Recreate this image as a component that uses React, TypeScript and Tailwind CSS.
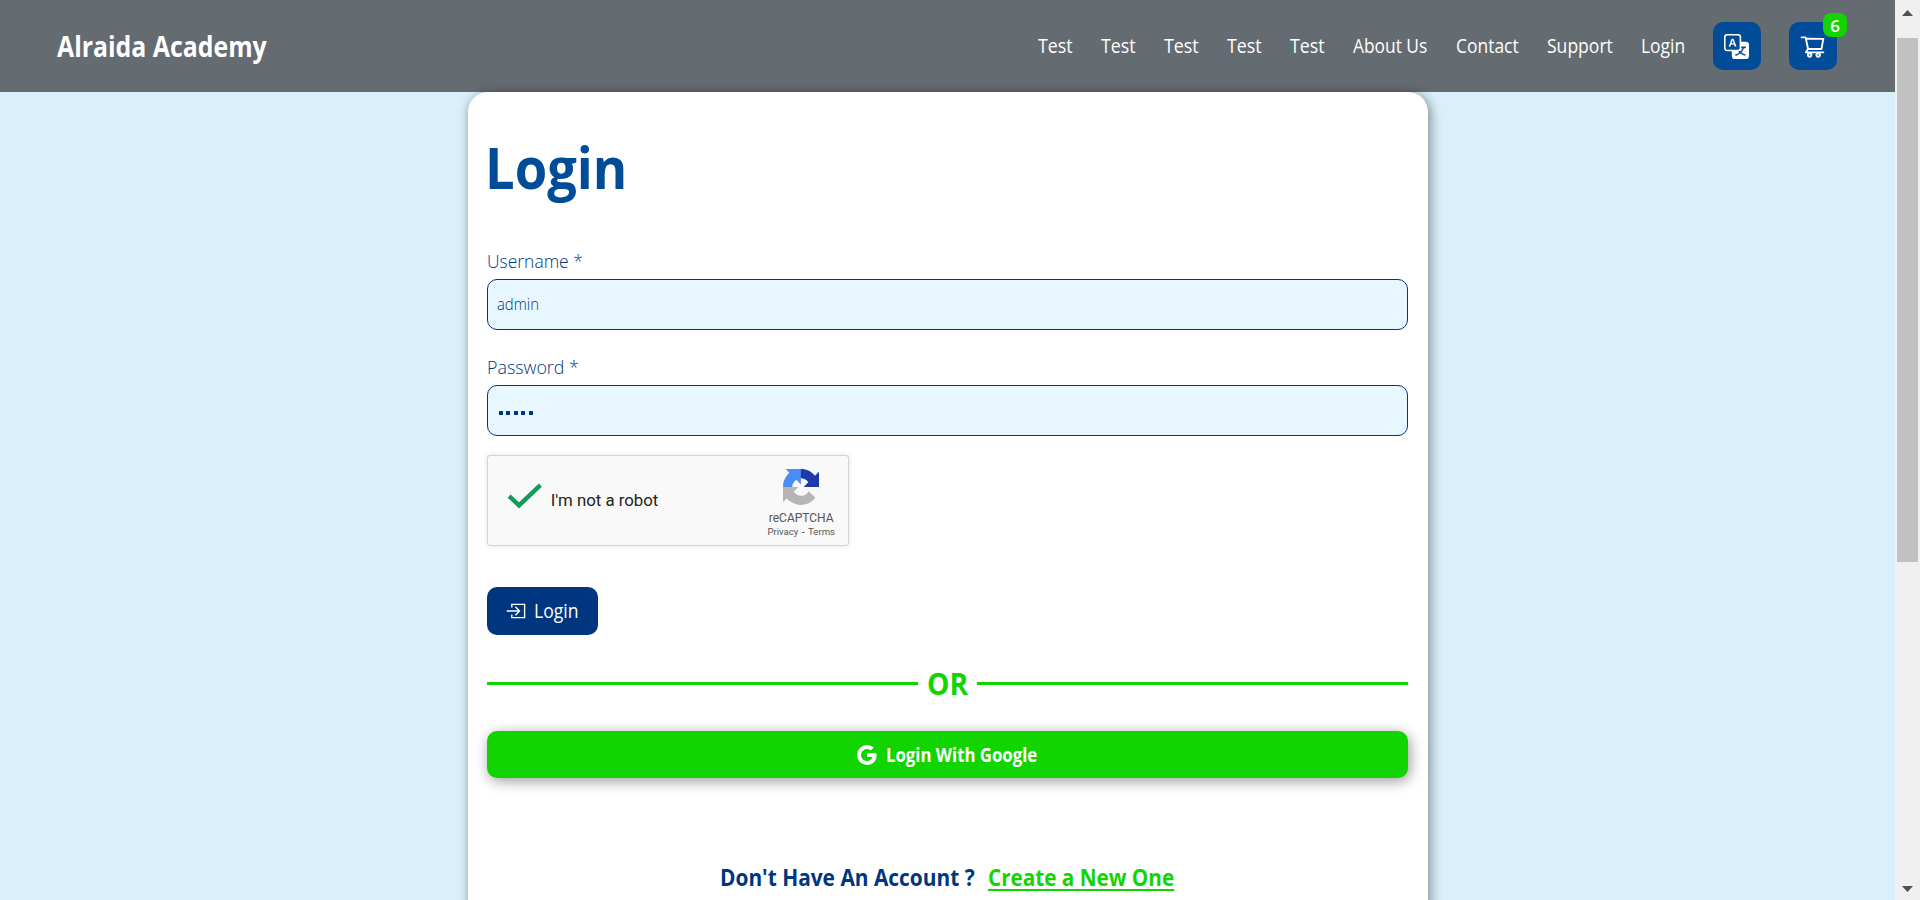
import React from "react";
import { AiOutlineShoppingCart } from "react-icons/ai";
import { BsGoogle, BsTranslate } from "react-icons/bs";

const navItems = [
  { label: "Test", box: "w-[34px]", scale: "scale-x-[0.925]" },
  { label: "Test", box: "w-[34px]", scale: "scale-x-[0.925]" },
  { label: "Test", box: "w-[34px]", scale: "scale-x-[0.925]" },
  { label: "Test", box: "w-[34px]", scale: "scale-x-[0.925]" },
  { label: "Test", box: "w-[34px]", scale: "scale-x-[0.925]" },
  { label: "About Us", box: "w-[74px]", scale: "scale-x-[0.9]" },
  { label: "Contact", box: "w-[62px]", scale: "scale-x-[0.905]" },
  { label: "Support", box: "w-[65px]", scale: "scale-x-[0.91]" },
  { label: "Login", box: "w-[43px]", scale: "scale-x-[0.905]" },
];

function Header() {
  return (
    <header className="flex h-[92px] shrink-0 items-center justify-between bg-[#646b71] pl-[57px] pr-[58px] text-white">
      <span className="origin-left scale-x-[0.857] whitespace-nowrap text-[29px] font-bold">Alraida Academy</span>
      <nav className="flex items-center gap-[29px]">
        {navItems.map((item, i) => (
          <a key={i} className={`-ml-[0.5px] mr-[0.5px] block ${item.box}`}>
            <span className={`inline-block origin-left whitespace-nowrap text-[19.3px] font-medium ${item.scale}`}>
              {item.label}
            </span>
          </a>
        ))}
        <button className="flex size-12 items-center justify-center rounded-[10px] bg-[#004c99]">
          <BsTranslate className="-ml-px size-[25px]" />
        </button>
        <button className="relative -ml-px flex size-12 items-center justify-center rounded-[10px] bg-[#004c99]">
          <AiOutlineShoppingCart className="-ml-px size-[27px]" />
          <span className="absolute -right-[10px] -top-[9px] flex size-6 items-center justify-center rounded-[8px] bg-[#11d400] text-[17px] font-semibold leading-none">
            6
          </span>
        </button>
      </nav>
    </header>
  );
}

function LoginIcon() {
  return (
    <svg viewBox="0 0 20 18" className="h-[18px] w-5" fill="none" stroke="currentColor" strokeWidth="1.4">
      <path d="M5.8 5.6V2.4h12.8v13.2H5.8v-3.2" />
      <path d="M.8 9h12.4M9.4 4.8 13.5 9l-4.1 4.2" />
    </svg>
  );
}

function Captcha() {
  return (
    <div className="mt-[19px] flex h-[91px] w-[362px] items-stretch rounded-[3px] border border-[#d3d3d3] bg-[#f9f9f9] font-[Roboto,sans-serif] shadow-[0_0_4px_1px_rgba(0,0,0,0.08)]">
      <svg viewBox="0 0 36 28" className="ml-[19px] mt-[26px] h-7 w-9" fill="none" stroke="#0f9d58" strokeWidth="4.4">
        <path d="M2.2 14.2 12 23.4 33.4 3.2" />
      </svg>
      <span className="ml-[8px] flex w-[200px] items-center whitespace-nowrap text-[16.8px] text-[#222]">
        I'm not a robot
      </span>
      <div className="ml-[15.5px] flex w-[70px] flex-col items-center pt-[13px] text-[#555]">
        <svg viewBox="0 0 64 64" className="size-9">
          <path fill="#1c3aa9" d="M64 31.955l-.033-1.37V4.687l-7.16 7.16C50.948 4.674 42.033.093 32.05.093c-10.4 0-19.622 4.96-25.458 12.64l11.736 11.86a15.55 15.55 0 0 1 4.754-5.334c2.05-1.6 4.952-2.906 8.968-2.906.485 0 .86.057 1.135.163 4.976.393 9.288 3.14 11.828 7.124l-8.307 8.307L64 31.953" />
          <path fill="#4a8df6" d="M31.862.094l-1.37.033H4.594l7.16 7.16C4.58 13.147 0 22.06 0 32.046c0 10.4 4.96 19.622 12.64 25.458L24.5 45.768a15.55 15.55 0 0 1-5.334-4.754c-1.6-2.05-2.906-4.952-2.906-8.968 0-.485.057-.86.163-1.135.393-4.976 3.14-9.288 7.124-11.828l8.307 8.307L31.86.095" />
          <path fill="#b5b5b5" d="M.001 32.045l.033 1.37v25.898l7.16-7.16c5.86 7.173 14.774 11.754 24.76 11.754 10.4 0 19.622-4.96 25.458-12.64l-11.736-11.86a15.55 15.55 0 0 1-4.754 5.334c-2.05 1.6-4.952 2.906-8.968 2.906-.485 0-.86-.057-1.135-.163-4.976-.393-9.288-3.14-11.828-7.124l8.307-8.307c-10.522.04-22.4.066-27.295-.005" />
        </svg>
        <span className="mt-[5px] text-[12px] leading-4">reCAPTCHA</span>
        <span className="flex gap-[3.5px] whitespace-nowrap text-[9.6px] leading-3">
          <a>Privacy</a>
          <span className="text-black">-</span>
          <a>Terms</a>
        </span>
      </div>
    </div>
  );
}

function Scrollbar() {
  return (
    <div className="flex w-[25px] shrink-0 flex-col items-center bg-[#f0f0f0]">
      <svg viewBox="0 0 11 6" className="mt-[10px] h-[6px] w-[11px]" fill="#505050">
        <path d="M0 6 5.5 0 11 6z" />
      </svg>
      <div className="mt-[22px] h-[524px] w-[21px] bg-[#c1c1c1]" />
      <svg viewBox="0 0 11 6" className="mb-2 mt-auto h-[6px] w-[11px]" fill="#505050">
        <path d="M0 0h11L5.5 6z" />
      </svg>
    </div>
  );
}

export default function App() {
  return (
    <div className="flex h-[900px] w-[1920px] overflow-hidden font-['Open_Sans',sans-serif]">
      <div className="flex min-w-0 flex-1 flex-col overflow-hidden bg-[#d9effb]">
        <Header />
        <main className="mx-auto h-[1000px] w-[960px] shrink-0 rounded-[20px] bg-white px-[19.2px] text-[#003580] shadow-[2px_2px_12px_rgba(0,0,0,0.45)]">
          <h1 className="-ml-[1.5px] mt-[45px] h-[60px] origin-left scale-x-[0.905] text-[58px] font-bold leading-[60px] text-[#004c99]">
            Login
          </h1>

          <label className="mt-[51px] block h-[26px] origin-left scale-x-[0.93] text-[18.8px] font-[350] leading-[26px]">
            Username *
          </label>
          <div className="mt-[5px] flex h-[51px] items-center rounded-[10px] border border-[#003580] bg-[#e8f6ff] px-[9.5px]">
            <span className="origin-left scale-x-[0.94] text-[15.8px] font-[350]">admin</span>
          </div>

          <label className="mt-6 block h-[26px] origin-left scale-x-[0.95] text-[18.8px] font-[350] leading-[26px]">
            Password *
          </label>
          <div className="mt-[5px] flex h-[51px] items-center gap-[3.5px] rounded-[10px] border border-[#003580] bg-[#e8f6ff] px-[11px] pt-[5px]">
            {[0, 1, 2, 3, 4].map((n) => (
              <span key={n} className="size-1 bg-[#003580]" />
            ))}
          </div>

          <Captcha />

          <button className="mt-[41px] flex h-12 w-[111px] items-center rounded-[10px] bg-[#003580] pl-[19px] text-white">
            <LoginIcon />
            <span className="ml-[8.5px] origin-left scale-x-[0.91] text-[19.3px] font-medium">Login</span>
          </button>

          <div className="mt-[30px] flex h-9 items-center text-[#11d400]">
            <span className="h-[3px] flex-1 bg-[#11d400]" />
            <span className="flex w-[59px] justify-center">
              <span className="scale-x-[0.91] text-[31px] font-bold leading-9">OR</span>
            </span>
            <span className="h-[3px] flex-1 bg-[#11d400]" />
          </div>

          <button className="mt-[30px] flex h-[47px] w-full items-center rounded-[10px] bg-[#11d400] pl-[370px] text-white shadow-[2px_3px_14px_rgba(0,0,0,0.4)]">
            <BsGoogle className="size-5" />
            <span className="ml-[9px] mt-px origin-left scale-x-[0.87] whitespace-nowrap text-[19.3px] font-bold">
              Login With Google
            </span>
          </button>

          <p className="mt-[83px] flex h-8 pl-[233.5px] text-[24px] font-bold leading-8">
            <span className="w-[268px]">
              <span className="inline-block origin-left scale-x-[0.87] whitespace-nowrap">Don't Have An Account ?</span>
            </span>
            <a className="inline-block origin-left scale-x-[0.862] whitespace-nowrap text-[#11d400] underline decoration-2 underline-offset-[3px]">
              Create a New One
            </a>
          </p>
        </main>
      </div>
      <Scrollbar />
    </div>
  );
}
